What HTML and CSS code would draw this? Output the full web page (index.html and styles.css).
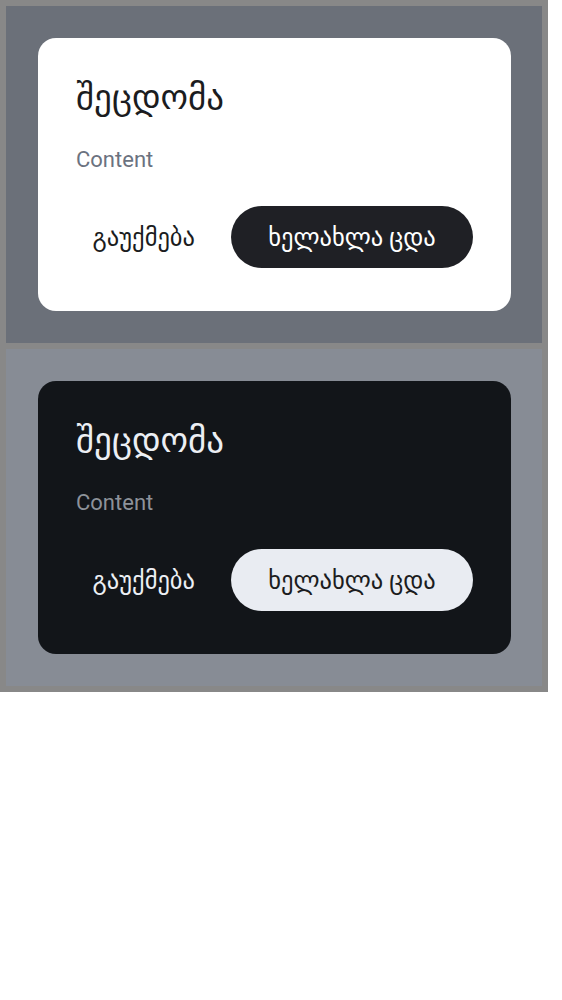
FILE: index.html
```html
<!DOCTYPE html>
<html lang="ka">
<head>
<meta charset="utf-8">
<link rel="stylesheet" href="styles.css">
</head>
<body>
<div class="frame">
  <section class="scene scene-light">
    <div class="dialog dialog-light">
      <h2 class="title">შეცდომა</h2>
      <p class="content">Content</p>
      <div class="actions">
        <button class="btn btn-text">გაუქმება</button>
        <button class="btn btn-filled">ხელახლა ცდა</button>
      </div>
    </div>
  </section>
  <section class="scene scene-dark">
    <div class="dialog dialog-dark">
      <h2 class="title">შეცდომა</h2>
      <p class="content">Content</p>
      <div class="actions">
        <button class="btn btn-text">გაუქმება</button>
        <button class="btn btn-filled">ხელახლა ცდა</button>
      </div>
    </div>
  </section>
</div>
</body>
</html>
```
FILE: styles.css
```css
html, body {
  margin: 0;
  padding: 0;
  background: #ffffff;
}
body {
  font-family: Roboto, "DejaVu Sans", sans-serif;
}
.frame {
  width: 548px;
  box-sizing: border-box;
  padding: 6px;
  display: flex;
  flex-direction: column;
  gap: 6px;
  background: #888888;
}
.scene {
  padding: 32px 31px 32px 32px;
  height: 337px;
  box-sizing: border-box;
}
.scene-light { background: #6b7079; }
.scene-dark { background: #878c95; }
.dialog {
  height: 273px;
  box-sizing: border-box;
  border-radius: 18px;
  padding: 38px 38px 43px 38px;
  display: flex;
  flex-direction: column;
}
.dialog-light { background: #ffffff; color: #1b1c20; }
.dialog-dark { background: #121519; color: #eceff4; }
.title {
  margin: 0;
  font-weight: 400;
  font-size: 35px;
  line-height: 44px;
}
.content {
  margin: 26px 0 0 0;
  font-size: 22px;
  line-height: 28px;
  color: #6b7280;
}
.dialog-dark .content { color: #8d929a; }
.actions {
  margin-top: auto;
  display: flex;
  justify-content: flex-end;
  align-items: center;
  gap: 17px;
}
.btn {
  flex-shrink: 0;
  border: none;
  font-family: Roboto, "DejaVu Sans", sans-serif;
  font-size: 24.5px;
  height: 62px;
  border-radius: 31px;
  padding: 0 19px;
  cursor: pointer;
}
.btn-text {
  background: transparent;
}
.dialog-light .btn-text { color: #1b1c20; }
.dialog-dark .btn-text { color: #eceff4; }
.btn-filled { width: 242px; }
.dialog-light .btn-filled { background: #1f2025; color: #ffffff; }
.dialog-dark .btn-filled { background: #e9ecf2; color: #1b1c20; }
```
